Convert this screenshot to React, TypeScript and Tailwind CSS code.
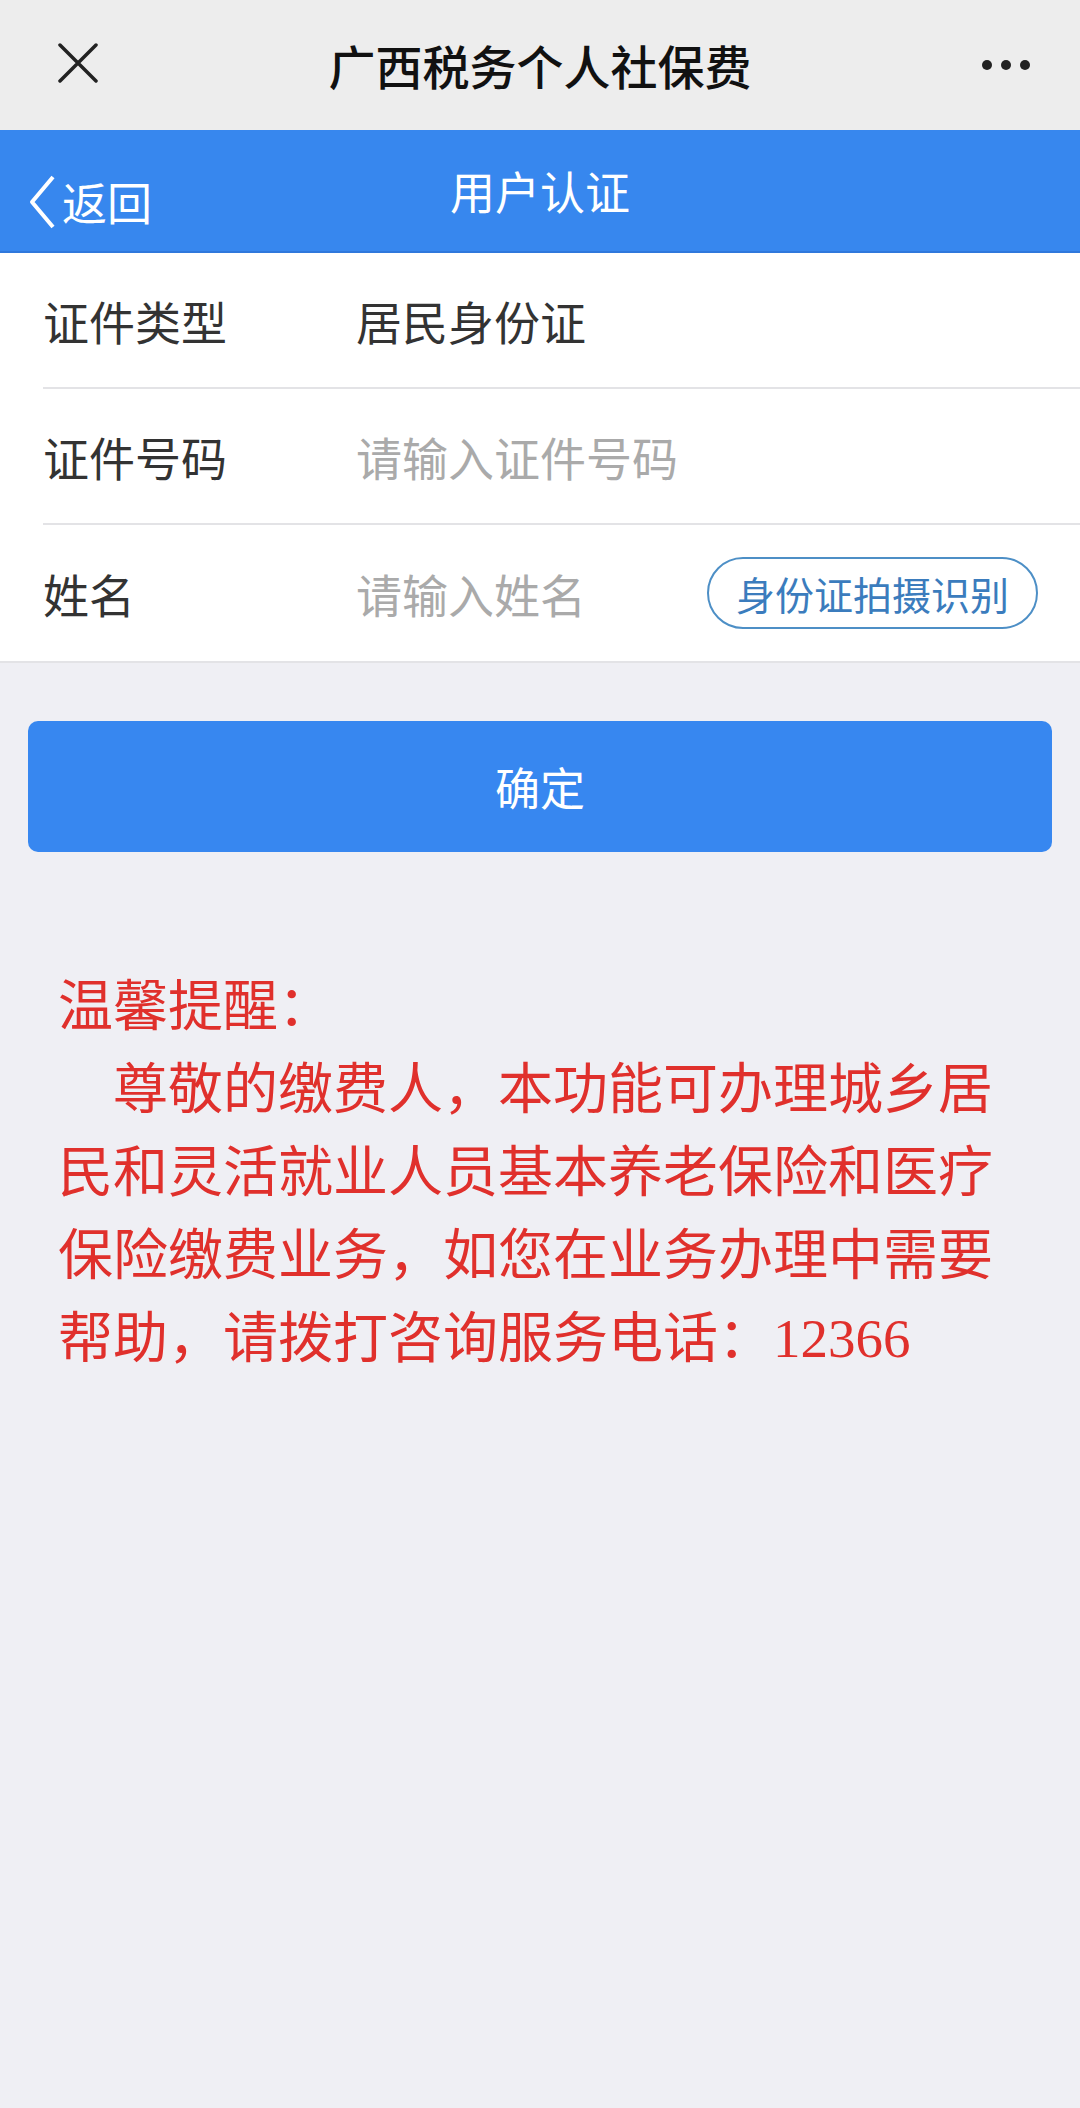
import React from 'react';

const cjk = { fontFamily: '"Noto Sans CJK SC", "Noto Sans", sans-serif' };

const NOTICE = [
  '\u3000尊敬的缴费人，本功能可办理城乡居',
  '民和灵活就业人员基本养老保险和医疗',
  '保险缴费业务，如您在业务办理中需要',
];

const FormRow: React.FC<{ label: string; children: React.ReactNode; last?: boolean }> = ({
  label,
  children,
  last,
}) => (
  <div className="pl-[43px]">
    <div
      className={
        'flex h-[136px] items-center pr-[42px] ' + (last ? '' : 'border-b-2 border-[#e3e3e6]')
      }
    >
      <div className="w-[313px] shrink-0 text-[46px] text-[#333333]">{label}</div>
      <div className="flex flex-1 items-center justify-between">{children}</div>
    </div>
  </div>
);

export default function App() {
  return (
    <div className="min-h-screen w-[1080px] bg-[#efeff4]" style={cjk}>
      {/* wechat top bar */}
      <div className="flex h-[130px] items-center justify-between bg-[#ededed] px-[58px]">
        <svg width="40" height="40" viewBox="0 0 40 40" className="mb-[4px]">
          <path d="M2 2 L38 38 M38 2 L2 38" stroke="#222" strokeWidth="3.5" strokeLinecap="round" />
        </svg>
        <div className="text-[47px] font-medium text-[#111]">广西税务个人社保费</div>
        <div className="flex w-[50px] items-center gap-[9px] mr-[-10px]">
          <span className="h-[10px] w-[10px] rounded-full bg-[#222]" />
          <span className="h-[10px] w-[10px] rounded-full bg-[#222]" />
          <span className="h-[10px] w-[10px] rounded-full bg-[#222]" />
        </div>
      </div>

      {/* blue header */}
      <div className="relative flex h-[123px] items-center justify-center border-b-2 border-[#2f78dc] bg-[#3787ee]">
        <div className="absolute left-[28px] top-[38px] flex items-center">
          <svg width="28" height="54" viewBox="0 0 28 54">
            <path d="M25 2 L4 27 L25 52" fill="none" stroke="#fff" strokeWidth="4" strokeLinejoin="round" />
          </svg>
          <span className="ml-[6px] text-[45px] text-white">返回</span>
        </div>
        <div className="text-[45px] text-white">用户认证</div>
      </div>

      {/* form */}
      <div className="border-b-2 border-[#e3e3e6] bg-white">
        <FormRow label="证件类型">
          <span className="text-[46px] text-[#333333]">居民身份证</span>
        </FormRow>
        <FormRow label="证件号码">
          <span className="text-[46px] text-[#aaaaaa]">请输入证件号码</span>
        </FormRow>
        <FormRow label="姓名" last>
          <span className="text-[46px] text-[#aaaaaa]">请输入姓名</span>
          <button className="flex h-[72px] w-[331px] items-center justify-center rounded-full border-2 border-[#4d8fc6] text-[39px] text-[#3b7cbd]">
            身份证拍摄识别
          </button>
        </FormRow>
      </div>

      <div className="px-[28px] pt-[58px]">
        <button className="flex h-[131px] w-full items-center justify-center rounded-[10px] bg-[#3787f0] text-[45px] text-white">
          确定
        </button>
      </div>

      {/* notice */}
      <div className="pl-[58px] pt-[108px] text-[55px] leading-[83px] text-[#e0302c]">
        <div>温馨提醒：</div>
        {NOTICE.map(line => (
          <div key={line} className="whitespace-pre">
            {line}
          </div>
        ))}
        <div className="whitespace-pre">
          帮助，请拨打咨询服务电话：
          <span style={{ fontFamily: '"Liberation Serif", serif' }}>12366</span>
        </div>
      </div>
    </div>
  );
}
